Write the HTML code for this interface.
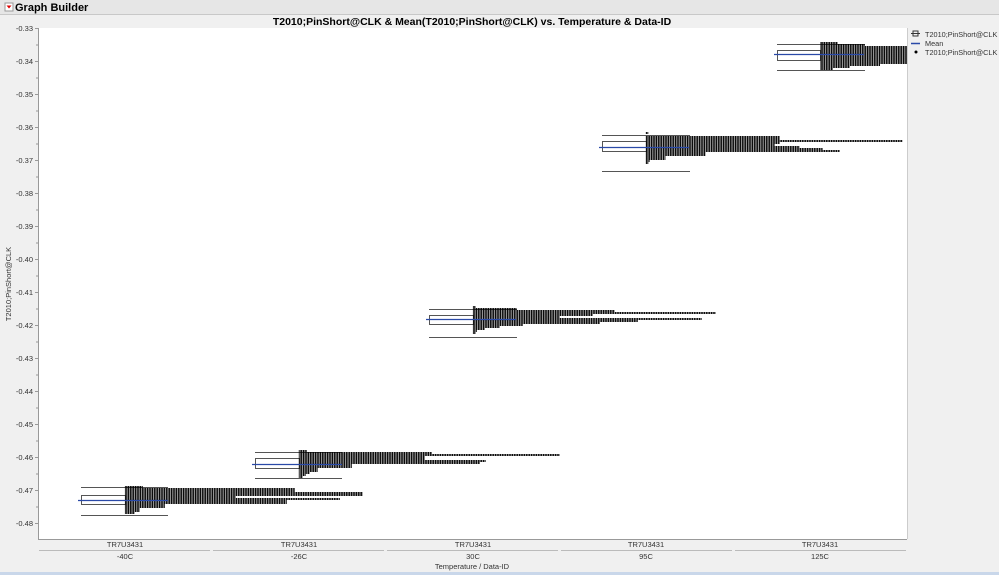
<!DOCTYPE html>
<html><head><meta charset="utf-8"><style>
html,body{margin:0;padding:0;background:#f0f0f0;width:999px;height:575px;overflow:hidden;font-family:"Liberation Sans",sans-serif}
</style></head><body>
<svg width="999" height="575" xmlns="http://www.w3.org/2000/svg" font-family="Liberation Sans, sans-serif">
<defs>
<pattern id="d" x="0" y="0" width="2.4" height="2" patternUnits="userSpaceOnUse">
<circle cx="1.2" cy="1" r="1.05" fill="#000"/>
</pattern>
</defs>
<rect x="0" y="0" width="999" height="575" fill="#f0f0f0"/>
<rect x="0" y="0" width="999" height="14" fill="#e6e6e6"/>
<line x1="0" y1="14.5" x2="999" y2="14.5" stroke="#c8c8c8"/>
<rect x="5" y="3" width="8" height="8" fill="#fff" stroke="#999"/>
<path d="M6.5 5.5h5l-2.5 3z" fill="#d00"/>
<text x="15" y="11" font-size="11" font-weight="bold" fill="#000">Graph Builder</text>
<text x="472" y="25" font-size="10.5" font-weight="bold" text-anchor="middle" fill="#000">T2010;PinShort@CLK &amp; Mean(T2010;PinShort@CLK) vs. Temperature &amp; Data-ID</text>
<rect x="38" y="28" width="869" height="511" fill="#fff"/>
<line x1="38.5" y1="28" x2="38.5" y2="539" stroke="#999"/>
<line x1="38" y1="539.5" x2="907" y2="539.5" stroke="#999"/>
<line x1="907.5" y1="28" x2="907.5" y2="539" stroke="#ccc"/>
<g font-size="7.5" fill="#333" text-anchor="end">
<text x="33" y="31">-0.33</text><text x="33" y="64">-0.34</text><text x="33" y="97">-0.35</text><text x="33" y="130">-0.36</text><text x="33" y="163">-0.37</text><text x="33" y="196">-0.38</text><text x="33" y="229">-0.39</text><text x="33" y="262">-0.40</text><text x="33" y="295">-0.41</text><text x="33" y="328">-0.42</text><text x="33" y="361">-0.43</text><text x="33" y="394">-0.44</text><text x="33" y="427">-0.45</text><text x="33" y="460">-0.46</text><text x="33" y="493">-0.47</text><text x="33" y="526">-0.48</text>
</g>
<g stroke="#999">
<path d="M35 28.5h3M35 61.5h3M35 94.5h3M35 127.5h3M35 160.5h3M35 193.5h3M35 226.5h3M35 259.5h3M35 292.5h3M35 325.5h3M35 358.5h3M35 391.5h3M35 424.5h3M35 457.5h3M35 490.5h3M35 523.5h3"/>
<path d="M36 45h2M36 78h2M36 111h2M36 144h2M36 177h2M36 210h2M36 243h2M36 276h2M36 309h2M36 342h2M36 375h2M36 408h2M36 441h2M36 474h2M36 507h2"/>
</g>
<text transform="translate(11,284) rotate(-90)" font-size="7.5" fill="#333" text-anchor="middle">T2010;PinShort@CLK</text>
<g font-size="7.5" fill="#333" text-anchor="middle">
<text x="125" y="547">TR7U3431</text><text x="299" y="547">TR7U3431</text><text x="473" y="547">TR7U3431</text><text x="646" y="547">TR7U3431</text><text x="820" y="547">TR7U3431</text>
<text x="125" y="559">-40C</text><text x="299" y="559">-26C</text><text x="473" y="559">30C</text><text x="646" y="559">95C</text><text x="820" y="559">125C</text>
<text x="472" y="569">Temperature / Data-ID</text>
</g>
<g stroke="#bbb"><path d="M39 550.5h171M213 550.5h171M387 550.5h171M561 550.5h171M735 550.5h171"/></g>
<rect x="0" y="572" width="999" height="3" fill="#c9d7ea"/>
<rect x="913" y="31" width="5" height="5" fill="none" stroke="#333"/><line x1="911" y1="33.5" x2="920" y2="33.5" stroke="#333"/>
<text x="925" y="37" font-size="7.3" fill="#333">T2010;PinShort@CLK</text>
<line x1="911" y1="43.5" x2="920" y2="43.5" stroke="#2a4aa8" stroke-width="1.5"/>
<text x="925" y="46" font-size="7.3" fill="#333">Mean</text>
<circle cx="916" cy="52" r="1.5" fill="#000"/>
<text x="925" y="55" font-size="7.3" fill="#333">T2010;PinShort@CLK</text>
<g stroke="#555" fill="none" stroke-width="1">
<path d="M81 487.5h87M81 515.5h87"/><rect x="81.5" y="495.5" width="44" height="9"/>
<path d="M255 452.5h87M255 478.5h87"/><rect x="255.5" y="458.5" width="44" height="10"/>
<path d="M429 309.5h88M429 337.5h88"/><rect x="429.5" y="315.5" width="44" height="9"/>
<path d="M602 135.5h88M602 171.5h88"/><rect x="602.5" y="141.5" width="44" height="10"/>
<path d="M777 44.5h88M777 70.5h88"/><rect x="777.5" y="50.5" width="43" height="10"/>
</g>
<g fill="url(#d)">
<!-- -40C -->
<rect x="124.8" y="486" width="18" height="2"/><rect x="124.8" y="488" width="170" height="2"/><rect x="124.8" y="490" width="170" height="2"/><rect x="124.8" y="492" width="238" height="2"/><rect x="124.8" y="494" width="238" height="2"/><rect x="124.8" y="496" width="111" height="2"/><rect x="124.8" y="498" width="215" height="2"/><rect x="124.8" y="500" width="162" height="2"/><rect x="124.8" y="502" width="162" height="2"/><rect x="124.8" y="504" width="40" height="2"/><rect x="124.8" y="506" width="40" height="2"/><rect x="124.8" y="508" width="15" height="2"/><rect x="124.8" y="510" width="15" height="2"/><rect x="124.8" y="512" width="10" height="2"/>
<!-- -26C -->
<rect x="298.8" y="450" width="8" height="2"/><rect x="298.8" y="452" width="133" height="2"/><rect x="298.8" y="454" width="261" height="2"/><rect x="298.8" y="456" width="126" height="2"/><rect x="298.8" y="458" width="126" height="2"/><rect x="298.8" y="460" width="187" height="2"/><rect x="298.8" y="462" width="181" height="2"/><rect x="298.8" y="464" width="53" height="2"/><rect x="298.8" y="466" width="53" height="2"/><rect x="298.8" y="468" width="19" height="2"/><rect x="298.8" y="470" width="19" height="2"/><rect x="298.8" y="472" width="11" height="2"/><rect x="298.8" y="474" width="7" height="2"/><rect x="298.8" y="476" width="4" height="2"/>
<!-- 30C -->
<rect x="472.8" y="306" width="3" height="2"/><rect x="472.8" y="308" width="44" height="2"/><rect x="472.8" y="310" width="142" height="2"/><rect x="472.8" y="312" width="243" height="2"/><rect x="472.8" y="314" width="120" height="2"/><rect x="472.8" y="316" width="87" height="2"/><rect x="472.8" y="318" width="229" height="2"/><rect x="472.8" y="320" width="165" height="2"/><rect x="472.8" y="322" width="127" height="2"/><rect x="472.8" y="324" width="50" height="2"/><rect x="472.8" y="326" width="27" height="2"/><rect x="472.8" y="328" width="12" height="2"/><rect x="472.8" y="330" width="4" height="2"/><rect x="472.8" y="332" width="3" height="2"/>
<!-- 95C -->
<rect x="645.6" y="132" width="3" height="2"/><rect x="645.6" y="136" width="134" height="2"/><rect x="645.6" y="138" width="134" height="2"/><rect x="645.6" y="140" width="257" height="2"/><rect x="645.6" y="142" width="134" height="2"/><rect x="645.6" y="144" width="129" height="2"/><rect x="645.6" y="146" width="154" height="2"/><rect x="645.6" y="148" width="177" height="2"/><rect x="645.6" y="150" width="194" height="2"/><rect x="645.6" y="152" width="60" height="2"/><rect x="645.6" y="154" width="60" height="2"/><rect x="645.6" y="156" width="20" height="2"/><rect x="645.6" y="158" width="20" height="2"/><rect x="645.6" y="160" width="4" height="2"/><rect x="645.6" y="162" width="3" height="2"/>
<!-- 125C -->
<rect x="820" y="42" width="18" height="2"/><rect x="820" y="44" width="45" height="2"/><rect x="820" y="46" width="87" height="2"/><rect x="820" y="48" width="87" height="2"/><rect x="820" y="50" width="87" height="2"/><rect x="820" y="52" width="87" height="2"/><rect x="820" y="54" width="87" height="2"/><rect x="820" y="56" width="87" height="2"/><rect x="820" y="58" width="87" height="2"/><rect x="820" y="60" width="87" height="2"/><rect x="820" y="62" width="87" height="2"/><rect x="820" y="64" width="60" height="2"/><rect x="820" y="66" width="30" height="2"/><rect x="820" y="68" width="13" height="2"/>
</g>
<g stroke="#2a4aa8" stroke-width="1.2">
<path d="M78 500.5h90M252 464.5h90M426 319.5h90M599 147.5h90M774 54.5h90"/>
</g>
</svg>
</body></html>
